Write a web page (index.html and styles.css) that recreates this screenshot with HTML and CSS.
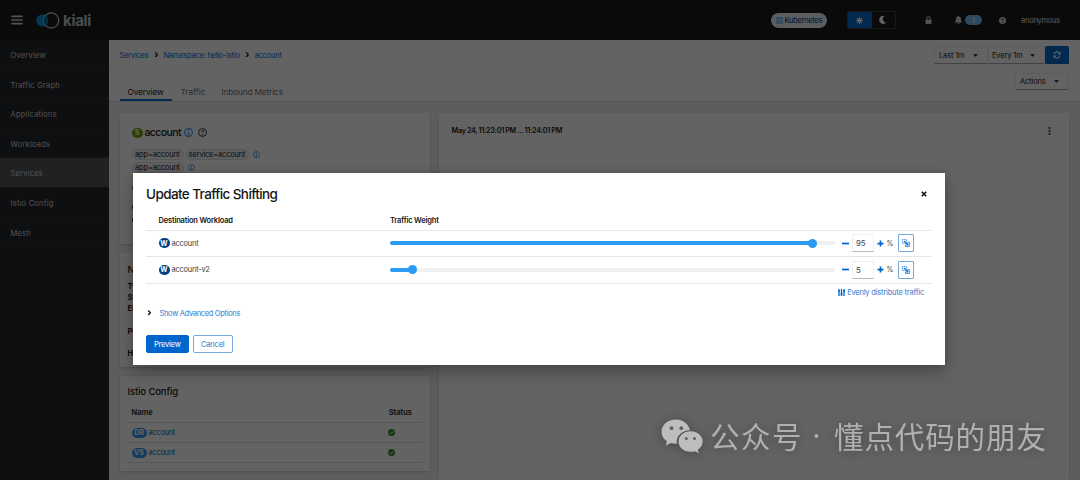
FILE: index.html
```html
<!DOCTYPE html>
<html lang="en">
<head>
<meta charset="utf-8">
<title>Kiali</title>
<link rel="stylesheet" href="styles.css">
</head>
<body>
<svg class="defs" width="0" height="0">
  <symbol id="info" viewBox="0 0 16 16"><circle cx="8" cy="8" r="6.900" fill="none" stroke="currentColor" stroke-width="2"/><path d="M7 3.600h2v2H7zM6.200 7h2.700v4.200h1v1.200H6.200v-1.200h1V8.200h-1z" fill="currentColor"/></symbol>
  <symbol id="check" viewBox="0 0 16 16"><circle cx="8" cy="8" r="8" fill="currentColor"/><path d="M4 8.300l2.800 2.800L12.200 5.500" fill="none" stroke="#fff" stroke-width="2.200"/></symbol>
  <symbol id="angle" viewBox="0 0 8 10"><path d="M2 1l4 4-4 4" fill="none" stroke="currentColor" stroke-width="2.400"/></symbol>
  <symbol id="caret" viewBox="0 0 10 6"><path d="M0 .5h10L5 5.500z" fill="currentColor"/></symbol>
  <symbol id="mirror" viewBox="0 0 16 16"><path d="M1 1h8v8H1z" fill="none" stroke="currentColor" stroke-width="1.300" stroke-dasharray="2 1"/><path d="M11 7h4v8H7v-4" fill="none" stroke="currentColor" stroke-width="1.300"/><path d="M4 4l7 7" stroke="currentColor" stroke-width="2.400"/><path d="M12.800 7.500v5.300H7.500z" fill="currentColor"/></symbol>
</svg>
<div class="page">
  <header class="masthead">
    <svg class="burger" viewBox="0 0 12 10"><path d="M.3 1.300h11.400M.3 5h11.400M.3 8.700h11.400" stroke="#d2d2d2" stroke-width="1.700"/></svg>
    <svg class="brand-mark" viewBox="0 0 24 17"><circle cx="6.300" cy="8.500" r="6" fill="#0093dd"/><circle cx="15.200" cy="8.500" r="7.600" fill="none" stroke="#c2d0d8" stroke-width="1.300"/><path d="M9.300 3.700a7.300 7.300 0 0 0 0 9.600 6 6 0 0 0 0-9.600z" fill="#00699e"/></svg>
    <span class="brand">kiali</span>
    <div class="tools">
      <span class="cluster"><svg viewBox="0 0 8 8"><path d="M0 .3h8v2H0zM0 3h8v2H0zM0 5.700h8v2H0z" fill="#73bcf7"/></svg><span class="t">Kubernetes</span></span>
      <div class="theme">
        <span class="sun"><svg viewBox="0 0 16 16"><circle cx="8" cy="8" r="4.600" fill="#fff"/><path d="M8 0v16M0 8h16M2.300 2.300l11.400 11.400M13.700 2.300L2.300 13.700" stroke="#fff" stroke-width="2.400"/></svg></span>
        <span class="moon"><svg viewBox="0 0 16 16"><path d="M11 0A8 8 0 1 0 14.500 13 7 7 0 0 1 11 0z" fill="#fff"/></svg></span>
      </div>
      <svg class="lock" viewBox="0 0 14 16"><path d="M3.500 7V5a3.500 3.500 0 0 1 7 0v2" fill="none" stroke="#d2d2d2" stroke-width="2.200"/><rect x="1" y="7" width="12" height="9" rx="1.500" fill="#d2d2d2"/></svg>
      <svg class="bell" viewBox="0 0 14 16"><path d="M7 0a1 1 0 0 1 1 1.200C10.500 1.700 12 3.700 12 6c0 3 .8 4.500 2 6v1H0v-1c1.200-1.500 2-3 2-6 0-2.300 1.500-4.300 4-4.800A1 1 0 0 1 7 0zM5 14h4a2 2 0 0 1-4 0z" fill="#d2d2d2"/></svg>
      <span class="count">1</span>
      <svg class="help" viewBox="0 0 16 16"><circle cx="8" cy="8" r="8" fill="#d2d2d2"/><path d="M5.600 6.200C5.700 3 10.700 3.200 10.400 6.100 10.200 7.600 8 7.700 8 9.500" fill="none" stroke="#151515" stroke-width="1.900"/><circle cx="8" cy="12" r="1.200" fill="#151515"/></svg>
      <span class="user t">anonymous</span>
    </div>
  </header>
  <div class="body">
    <nav class="sidebar">
      <a>Overview</a><a>Traffic Graph</a><a>Applications</a><a>Workloads</a><a class="current">Services</a><a>Istio Config</a><a>Mesh</a>
    </nav>
    <main class="main">
      <section class="top">
        <div class="crumbs"><a class="t">Services</a><svg><use href="#angle"/></svg><a class="t">Namespace: hello-istio</a><svg><use href="#angle"/></svg><a class="t">account</a></div>
        <div class="tabs"><span class="tab active">Overview</span><span class="tab t2">Traffic</span><span class="tab t3">Inbound Metrics</span></div>
        <div class="controls">
          <div class="refresh">
            <span class="select s1"><span class="t">Last 1m</span><svg><use href="#caret"/></svg></span><span class="select s2"><span class="t">Every 1m</span><svg><use href="#caret"/></svg></span>
            <span class="sync"><svg viewBox="0 0 16 16"><path d="M2 7a6 6 0 0 1 10.500-3M14 9a6 6 0 0 1-10.500 3" fill="none" stroke="#fff" stroke-width="2.300"/><path d="M15 1v6H9zM1 15V9h6z" fill="#fff"/></svg></span>
          </div>
          <span class="select s3"><span class="t">Actions</span><svg><use href="#caret"/></svg></span>
        </div>
      </section>
      <section class="cards">
        <div class="left">
          <article class="card summary">
            <div class="name"><b class="badge green">S</b><span>account</span><svg class="blue"><use href="#info"/></svg><svg class="q" viewBox="0 0 16 16"><circle cx="8" cy="8" r="7" fill="none" stroke="#151515" stroke-width="1.500"/><path d="M5.700 6.400C5.800 3.600 10.500 3.800 10.200 6.300 10 7.700 8 7.900 8 9.500" fill="none" stroke="#151515" stroke-width="1.500"/><circle cx="8" cy="11.800" r="1" fill="#151515"/></svg></div>
            <div class="labels"><span class="l1">app=account</span><span class="l2">service=account</span><svg><use href="#info"/></svg></div>
            <div class="labels second"><span class="l1">app=account</span><svg><use href="#info"/></svg></div>
            <i class="dot ok"></i><i class="dot app"></i><i class="dot wl"></i>
          </article>
          <article class="card network"><h2>Network</h2><b>Type</b><b>Service IP</b><b>Endpoints</b><b class="gap">Ports</b><b class="gap">Hostnames</b></article>
          <article class="card config">
            <h2>Istio Config</h2>
            <div class="row head"><b>Name</b><b class="st">Status</b></div>
            <div class="row"><b class="badge sky">DR</b><a class="t">account</a><svg><use href="#check"/></svg></div>
            <div class="row"><b class="badge sky">VS</b><a class="t">account</a><svg><use href="#check"/></svg></div>
          </article>
        </div>
        <article class="card graph"><b>May 24, 11:23:01 PM ... 11:24:01 PM</b><svg viewBox="0 0 3 9"><path d="M.5 1h2v2h-2zM.5 4h2v2h-2zM.5 7h2v2h-2z" fill="#555"/></svg></article>
      </section>
    </main>
  </div>
</div>
<div class="backdrop"></div>
<div class="dialog">
  <div class="title"><h1>Update Traffic Shifting</h1><svg viewBox="0 0 10 10"><path d="M1.300 1.300l7.400 7.400M8.700 1.300L1.300 8.700" stroke="#151515" stroke-width="2.700"/></svg></div>
  <div class="grid head"><b class="dw">Destination Workload</b><b class="tw">Traffic Weight</b></div>
  <div class="grid line">
    <div class="wl-name"><b class="badge navy">W</b><span class="t">account</span></div>
    <div class="slider"><i style="width:95%"></i></div>
    <div class="stepper"><svg class="sign" viewBox="0 0 8 8"><path d="M0 4h8" stroke="#06c" stroke-width="2"/></svg><span class="num">95</span><svg class="sign plus" viewBox="0 0 8 8"><path d="M.5 4h7M4 .5v7" stroke="#06c" stroke-width="2"/></svg><span class="t">%</span><span class="mirror"><svg><use href="#mirror"/></svg></span></div>
  </div>
  <div class="grid line">
    <div class="wl-name"><b class="badge navy">W</b><span class="t">account-v2</span></div>
    <div class="slider"><i style="width:5%"></i></div>
    <div class="stepper"><svg class="sign" viewBox="0 0 8 8"><path d="M0 4h8" stroke="#06c" stroke-width="2"/></svg><span class="num">5</span><svg class="sign plus" viewBox="0 0 8 8"><path d="M.5 4h7M4 .5v7" stroke="#06c" stroke-width="2"/></svg><span class="t">%</span><span class="mirror"><svg><use href="#mirror"/></svg></span></div>
  </div>
  <div class="even"><svg viewBox="0 0 14 14"><path d="M2 0v14M7 0v14M12 0v14" stroke="#06c" stroke-width="2.600"/><path d="M0 4h4M5 9.500h4M10 4h4" stroke="#06c" stroke-width="2.500"/></svg><span class="t">Evenly distribute traffic</span></div>
  <div class="advanced"><svg><use href="#angle"/></svg><span>Show Advanced Options</span></div>
  <div class="buttons"><span class="btn primary">Preview</span><span class="btn">Cancel</span></div>
</div>
<div class="watermark">
  <svg viewBox="0 0 42 35"><path d="M15 .5C6.800.500.5 6 .5 12.800c0 4 2 7.200 5.300 9.500l-1 4.300 5.200-2.500c2 .6 4 .8 6 .7-1.500-7 4.500-13.500 13-13.500C27.500 5 22 .5 15 .5z" fill="#bdbdbd"/><path d="M29.500 12.300c-7 0-12 4.700-12 10.300s5 10.200 12 10.200c1.500 0 3-.2 4.300-.6l4 2.100-1-3.400c3-2 4.900-5 4.900-8.300 0-5.600-5.500-10.300-12.200-10.300z" fill="#bdbdbd"/><g fill="#606060"><circle cx="10.500" cy="9.200" r="1.900"/><circle cx="20.300" cy="9.200" r="1.900"/><circle cx="25.300" cy="19.500" r="1.500"/><circle cx="33.500" cy="19.500" r="1.500"/></g></svg>
  <span class="w1">公众号</span><span class="w2">·</span><span class="w3">懂点代码的朋友</span>
</div>
</body>
</html>
```
FILE: styles.css
```css
* { box-sizing: border-box; }
body { margin: 0; width: 1080px; height: 480px; overflow: hidden; position: relative; font: 7.5px/10px Inter, "Liberation Sans", sans-serif; color: #151515; }
svg { display: block; flex: none; }
.defs { position: absolute; }
span, a, b, h1, h2 { white-space: nowrap; }
h1, h2 { margin: 0; font-weight: 500; }
.t { padding-top: 1px; }
.page { height: 480px; display: flex; flex-direction: column; }
.masthead { height: 40px; background: #151515; display: flex; align-items: center; padding: 0 21px 0 11px; color: #e0e0e0; flex: none; }
.burger { width: 12px; height: 10px; }
.brand-mark { width: 24px; height: 17px; margin-left: 13px; }
.brand { font: 700 15px/18px Inter, sans-serif; letter-spacing: -.3px; margin: 2px 0 0 3px; color: #b9c7ce; }
.tools { margin-left: auto; display: flex; align-items: center; }
.cluster { width: 56px; height: 15px; border-radius: 8px; background: #e7f1fa; color: #002952; display: flex; align-items: center; padding-left: 4.500px; gap: 2px; letter-spacing: -.28px; }
.cluster svg { width: 7px; height: 7px; }
.theme { display: flex; width: 49px; height: 18px; border: 1px solid #3c3f42; margin-left: 20px; border-radius: 2px; }
.theme span { width: 24px; display: grid; place-items: center; }
.theme svg { width: 7px; height: 7px; }
.theme .moon svg { width: 8px; height: 8px; }
.sun { background: #06c; }
.lock { width: 7px; height: 8px; margin-left: 29px; }
.bell { width: 7px; height: 8px; margin-left: 23px; }
.count { width: 17px; height: 10px; border-radius: 5px; background: #73bcf7; text-align: center; line-height: 11px; margin-left: 3px; color: #fff; }
.help { width: 7px; height: 7px; margin-left: 17px; }
.user { margin-left: 15px; width: 38px; letter-spacing: -.25px; }
.body { display: flex; flex: 1; min-height: 0; }
.sidebar { width: 109px; background: #212427; display: flex; flex-direction: column; }
.sidebar a { height: 29.600px; line-height: 31px; padding-left: 10.500px; color: #d5d5d5; border-bottom: 1px solid #2a2d30; letter-spacing: .22px; }
.sidebar .current { background: #4f5255; }
.main { flex: 1; background: #f0f0f0; display: flex; flex-direction: column; min-width: 0; }
.top { height: 61.500px; background: #fff; border-bottom: 1px solid #d8d8d8; display: grid; grid-template: 30px 31px / 1fr auto; padding: 0 11px 0 10.500px; flex: none; }
.crumbs { display: flex; align-items: center; color: #06c; gap: 5.300px; letter-spacing: -.24px; }
.crumbs svg { width: 4.500px; height: 5.500px; color: #151515; }
.tabs { grid-row: 2; display: flex; align-items: stretch; color: #6a6e73; }
.tab { line-height: 20px; padding: 12px 8px 0; font-size: 8.200px; }
.tab.active { width: 52px; color: #151515; border-bottom: 2px solid #06c; letter-spacing: -.05px; }
.t2 { padding-left: 9px; }
.t3 { letter-spacing: -.1px; }
.controls { grid-row: 1 / 3; grid-column: 2; display: flex; flex-direction: column; align-items: flex-end; padding-top: 6px; gap: 9px; }
.refresh { display: flex; }
.select { height: 17.500px; border: 1px solid #f0f0f0; border-bottom-color: #a8abae; display: flex; align-items: center; justify-content: space-between; padding: 1px 9px 0 4px; letter-spacing: -.15px; }
.select svg { width: 5px; height: 3px; }
.s1 { width: 54px; } .s2 { width: 57px; padding-left: 3px; } .s3 { width: 54px; }
.sync { width: 24px; height: 17.500px; border-radius: 1.500px; background: #06c; display: grid; place-items: center; }
.sync svg { width: 8px; height: 8px; }
.cards { flex: 1; display: flex; gap: 9px; padding: 11px 11px 0 10.500px; min-height: 0; }
.left { width: 310.500px; display: flex; flex-direction: column; gap: 9px; flex: none; }
.card { background: #fff; box-shadow: 0 1px 2px rgba(3,3,3,.16); flex: none; }
.summary { height: 131.500px; padding: 14px 12px 0; }
.name { display: flex; align-items: center; height: 12px; font: 500 10.500px/12px Inter, sans-serif; letter-spacing: -.6px; }
.name span { width: 36px; margin-left: 2px; }
.name svg { width: 9px; height: 9px; margin-left: 3px; }
.name .q { margin-left: 5px; }
.blue, .labels svg { color: #2b9af3; }
.badge { display: inline-flex; align-items: center; justify-content: center; height: 10px; min-width: 11px; border-radius: 5px; font: 700 7px/10px Inter, sans-serif; letter-spacing: 0; color: #fff; padding-top: 1px; }
.green { background: #6ca100; } .navy { background: #004080; } .sky { background: #2b9af3; width: 15px; }
.labels { display: flex; gap: 2px; margin-top: 11px; height: 10.500px; align-items: center; letter-spacing: -.2px; }
.labels.second { margin-top: 2.500px; }
.labels span { border: 1px solid #dcdcdc; background: #f5f5f5; height: 11px; line-height: 10px; border-radius: 6px; text-align: center; }
.l1 { width: 52px; } .l2 { width: 63px; }
.labels svg { width: 7px; height: 7px; margin-left: 2.500px; }
.dot { display: block; width: 6px; height: 6px; border-radius: 3px; background: #004080; margin-top: 7px; }
.ok { background: #3e8635; margin-top: 12px; } .app { margin-top: 13px; }
.network { height: 114px; padding: 11px 8px 0; display: flex; flex-direction: column; }
.network b { line-height: 11.200px; }
.network h2, .config h2 { font-size: 9.500px; line-height: 12px; letter-spacing: -.12px; }
.network h2 { margin-bottom: 5px; letter-spacing: -1.500px; }
.network .gap { margin-top: 11px; }
.config { height: 95px; padding: 10px 8px 0; }
.row { height: 20px; border-bottom: 1px solid #dcdcdc; display: flex; align-items: center; padding-left: 4px; }
.row.head { height: 25px; padding-top: 6px; }
.row b { font-weight: 600; }
.row .badge { font-weight: 700; }
.row .st { margin-left: 236px; }
.row a { color: #06c; margin-left: 2px; width: 239.500px; letter-spacing: -.3px; }
.row svg { width: 7px; height: 7px; color: #3e8635; }
.graph { flex: 1; padding: 13px 18.500px 0 12.500px; display: flex; justify-content: space-between; }
.graph b { font-weight: 600; letter-spacing: -.25px; word-spacing: -.3px; font-size: 7.200px; line-height: 10px; }
.graph svg { width: 3px; height: 9px; }
.backdrop { position: absolute; inset: 0; background: rgba(3,3,3,.62); }
.dialog { position: absolute; left: 133px; top: 173px; width: 812px; height: 192px; background: #fff; box-shadow: 0 8px 16px rgba(3,3,3,.25), 0 0 6px rgba(3,3,3,.15); padding: 12px 13px; }
.title { display: flex; justify-content: space-between; align-items: center; height: 18px; padding-right: 5px; }
.title h1 { font: 500 13.500px/18px Inter, sans-serif; letter-spacing: -.6px; }
.title svg { width: 6px; height: 6px; }
.grid { display: grid; grid-template-columns: 231.500px 445px 1fr; padding-left: 12.500px; height: 26.500px; align-items: center; border-bottom: 1px solid #e6e6e6; }
.grid.head { height: 27.500px; padding-top: 9px; }
.grid b { font-weight: 600; }
.grid .badge { font-weight: 700; }
.dw, .tw { letter-spacing: -.18px; }
.wl-name { display: flex; align-items: center; gap: 2px; letter-spacing: -.25px; color: #3c3f42; }
.slider { height: 4px; border-radius: 2px; background: #f0f0f0; }
.slider i { display: block; height: 4px; border-radius: 2px; background: #2b9af3; position: relative; }
.slider i::after { content: ""; position: absolute; right: -4.500px; top: -2.500px; width: 9px; height: 9px; border-radius: 50%; background: #2b9af3; }
.stepper { display: flex; align-items: center; padding-left: 6.500px; color: #3c3f42; }
.sign { width: 7px; height: 7px; }
.num { width: 22px; height: 18px; line-height: 17px; border: 1px solid #f0f0f0; border-bottom-color: #b8bbbe; padding-left: 3.500px; margin-left: 3px; font-size: 7.800px; }
.plus { margin: 0 3px; }
.stepper .t { width: 7px; font-size: 7px; }
.mirror { width: 16px; height: 18px; border: 1px solid #73a9df; border-radius: 1px; margin-left: 4px; display: grid; place-items: center; color: #06c; }
.mirror svg { width: 8px; height: 8px; }
.even { display: flex; justify-content: flex-end; align-items: center; gap: 2.500px; padding-right: 8px; height: 17px; color: #2b7bd0; letter-spacing: -.2px; }
.even svg { width: 7px; height: 7px; }
.advanced { display: flex; align-items: center; gap: 8px; padding-left: 1px; height: 26px; color: #2b7bd0; letter-spacing: -.32px; }
.advanced svg { width: 4.500px; height: 5.500px; color: #151515; margin-top: -1px; }
.buttons { display: flex; gap: 4px; margin-top: 8.500px; letter-spacing: -.2px; }
.btn { width: 40.500px; height: 17.500px; border: 1px solid #73a9df; border-radius: 2px; text-align: center; line-height: 17px; color: #2b7bd0; }
.primary { width: 42.500px; border-color: #06c; background: #06c; color: #fff; }
.watermark { position: absolute; left: 661px; top: 417px; display: flex; align-items: center; height: 36px; color: #b0b0b0; font: 400 29.500px/36px "Noto Sans CJK SC", sans-serif; filter: drop-shadow(0 1px 6px rgba(0,0,0,.3)); }
.watermark svg { width: 42px; height: 35px; margin-top: 2px; }
.w1 { margin-left: 7px; letter-spacing: 1.500px; }
.w2 { width: 31px; text-align: center; font-family: "Noto Sans", sans-serif; text-indent: -4px; }
.w3 { letter-spacing: .9px; }
```
